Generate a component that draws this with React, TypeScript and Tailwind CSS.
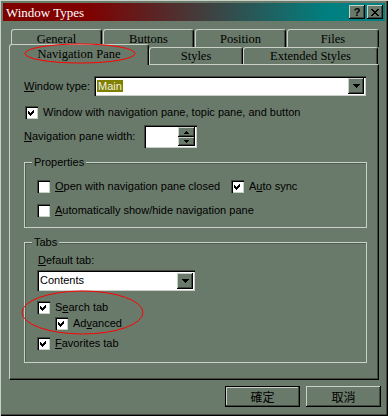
import React from 'react';

const raised = "shadow-[inset_-1px_-1px_#000,inset_1px_1px_#c8d0c8,inset_-2px_-2px_#404840]";
const sunken = "shadow-[inset_1px_1px_#404840,inset_2px_2px_#000,inset_-1px_-1px_#c8d0c8]";

function U({ children }: { children: React.ReactNode }) {
  return <span className="underline underline-offset-[1px] decoration-[1px]">{children}</span>;
}

function CB({ checked }: { checked?: boolean }) {
  return (
    <div className={`w-[13px] h-[13px] bg-white shrink-0 ${sunken}`}>
      {checked && (
        <svg width="13" height="13" viewBox="0 0 13 13" shapeRendering="crispEdges">
          <polygon points="3,5 5,7 9,3 9,6 5,10 3,8" fill="#000" />
        </svg>
      )}
    </div>
  );
}

function DownBtn() {
  return (
    <div className={`w-[16px] h-[16px] bg-[#6a7a6a] flex items-center justify-center shrink-0 ${raised}`}>
      <svg width="7" height="4" viewBox="0 0 7 4" shapeRendering="crispEdges">
        <polygon points="0,0 7,0 3.5,4" fill="#000" />
      </svg>
    </div>
  );
}

function Tab({ label, w, selected }: { label: string; w: string; selected?: boolean }) {
  return (
    <div
      className={`${w} ${selected ? 'h-[21px] -mb-px relative z-10' : 'h-full'} bg-[#6a7a6a] border-t border-l border-r border-t-[#c8d0c8] border-l-[#c8d0c8] border-r-black rounded-t-[3px] shadow-[inset_-1px_0_#404840] flex ${selected ? 'items-start pt-[2px]' : 'items-center'} justify-center font-['Liberation_Serif',serif] text-[12.5px] leading-[14px] text-black shrink-0`}
    >
      {label}
    </div>
  );
}

function Btn({ children, def }: { children: React.ReactNode; def?: boolean }) {
  return (
    <div
      className={`w-[75px] h-[21px] flex items-center justify-center font-['Noto_Sans_CJK_TC',sans-serif] text-[12px] leading-none ${def ? 'border border-black shadow-[inset_-1px_-1px_#404840,inset_1px_1px_#c8d0c8]' : raised}`}
    >
      {children}
    </div>
  );
}

export default function App() {
  return (
    <div className="relative w-[388px] h-[416px] bg-[#6a7a6a] p-[3px] flex flex-col font-['Liberation_Sans',sans-serif] text-[11px] leading-[13px] text-black shadow-[inset_1px_1px_#c8d0c8,inset_-1px_-1px_#000,inset_-2px_-2px_#404840]">
      {/* Title bar */}
      <div className="h-[18px] flex items-center bg-[linear-gradient(to_right,#800000_0%,#800000_22%,#008080_85%,#008080_100%)] pl-[3px] pr-[2px]">
        <span className="font-['Liberation_Serif',serif] text-[13px] text-white leading-none">Window Types</span>
        <div className="ml-auto flex gap-[2px]">
          <div className={`w-[16px] h-[14px] bg-[#6a7a6a] flex items-center justify-center ${raised}`}>
            <span className="font-bold text-[11px] leading-none">?</span>
          </div>
          <div className={`w-[16px] h-[14px] bg-[#6a7a6a] flex items-center justify-center ${raised}`}>
            <svg width="8" height="7" viewBox="0 0 8 7" shapeRendering="crispEdges">
              <path d="M0.5 0 L7.5 7 M7.5 0 L0.5 7" stroke="#000" strokeWidth="1.6" />
            </svg>
          </div>
        </div>
      </div>

      {/* Tab rows */}
      <div className="mt-[8px] flex gap-[1px] pl-[8px] h-[18px]">
        <Tab label="General" w="w-[91px]" />
        <Tab label="Buttons" w="w-[91px]" />
        <Tab label="Position" w="w-[91px]" />
        <Tab label="Files" w="w-[92px]" />
      </div>
      <div className="flex items-end pl-[6px] h-[17px]">
        <Tab label="Navigation Pane" w="w-[140px]" selected />
        <Tab label="Styles" w="w-[94px]" />
        <Tab label="Extended Styles" w="w-[135px]" />
      </div>

      {/* Panel */}
      <div className="ml-[6px] w-[370px] h-[316px] border-l border-t border-r border-b border-l-[#c8d0c8] border-t-[#c8d0c8] border-r-black border-b-black shadow-[inset_-1px_-1px_#404840] flex flex-col">
        <div className="mt-[11px] h-[20px] flex items-center pl-[14px]">
          <span className="w-[70px]">
            <U>W</U>indow type:
          </span>
          <div className={`w-[272px] h-[20px] bg-white p-[2px] flex items-center ${sunken}`}>
            <div className="flex-1 pl-[1px]">
              <span className="bg-[#808000] text-[#f0f0e0] px-[1px]">Main</span>
            </div>
            <DownBtn />
          </div>
        </div>

        <div className="mt-[10px] h-[13px] flex items-center gap-[5px] pl-[15px]">
          <CB checked />
          <span>Window with navigation pane, topic pane, and button</span>
        </div>

        <div className="mt-[6px] h-[23px] flex items-center pl-[14px]">
          <span className="w-[120px]">
            <U>N</U>avigation pane width:
          </span>
          <div className={`w-[53px] h-[23px] bg-white p-[2px] flex justify-end ${sunken}`}>
            <div className="flex flex-col w-[17px]">
              <div className={`h-[10px] bg-[#6a7a6a] flex items-center justify-center ${raised}`}>
                <svg width="5" height="3" viewBox="0 0 5 3" shapeRendering="crispEdges">
                  <polygon points="2.5,0 5,3 0,3" fill="#000" />
                </svg>
              </div>
              <div className={`h-[9px] bg-[#6a7a6a] flex items-center justify-center ${raised}`}>
                <svg width="5" height="3" viewBox="0 0 5 3" shapeRendering="crispEdges">
                  <polygon points="0,0 5,0 2.5,3" fill="#000" />
                </svg>
              </div>
            </div>
          </div>
        </div>

        {/* Properties group */}
        <div className="mt-[14px] ml-[14px] w-[343px] h-[66px] border border-[#c8d0c8] shadow-[inset_1px_1px_#505e50] flex flex-col">
          <span className="self-start -mt-[7px] ml-[7px] px-[2px] bg-[#6a7a6a]">Properties</span>
          <div className="mt-[11px] h-[13px] flex pl-[12px]">
            <div className="w-[194px] flex items-center gap-[5px]">
              <CB />
              <span>
                <U>O</U>pen with navigation pane closed
              </span>
            </div>
            <div className="flex items-center gap-[5px]">
              <CB checked />
              <span>
                A<U>u</U>to sync
              </span>
            </div>
          </div>
          <div className="mt-[11px] h-[13px] flex items-center gap-[5px] pl-[12px]">
            <CB />
            <span>
              <U>A</U>utomatically show/hide navigation pane
            </span>
          </div>
        </div>

        {/* Tabs group */}
        <div className="mt-[14px] ml-[14px] w-[343px] h-[121px] border border-[#c8d0c8] shadow-[inset_1px_1px_#505e50] flex flex-col">
          <span className="self-start -mt-[7px] ml-[7px] px-[2px] bg-[#6a7a6a]">Tabs</span>
          <span className="mt-[5px] pl-[13px]">
            <U>D</U>efault tab:
          </span>
          <div className={`mt-[3px] ml-[12px] w-[158px] h-[21px] bg-white p-[2px] flex items-center ${sunken}`}>
            <span className="flex-1 pl-[1px]">Contents</span>
            <div className="h-[17px] flex items-center">
              <DownBtn />
            </div>
          </div>
          <div className="mt-[10px] h-[13px] flex items-center gap-[5px] pl-[12px]">
            <CB checked />
            <span>
              S<U>e</U>arch tab
            </span>
          </div>
          <div className="mt-[3px] h-[13px] flex items-center gap-[5px] pl-[30px]">
            <CB checked />
            <span>
              Ad<U>v</U>anced
            </span>
          </div>
          <div className="mt-[7px] h-[13px] flex items-center gap-[5px] pl-[12px]">
            <CB checked />
            <span>
              <U>F</U>avorites tab
            </span>
          </div>
        </div>
      </div>

      {/* Buttons */}
      <div className="mt-[6px] flex justify-end gap-[6px] pr-[4px]">
        <Btn def>確定</Btn>
        <Btn>取消</Btn>
      </div>

      {/* Red annotation ellipses */}
      <svg className="pointer-events-none absolute inset-0 z-20" width="388" height="416" viewBox="0 0 388 416">
        <ellipse cx="80" cy="53.5" rx="55" ry="9.5" fill="none" stroke="#ff0000" strokeWidth="1" />
        <ellipse cx="82.5" cy="312.5" rx="60.5" ry="21.5" fill="none" stroke="#ff0000" strokeWidth="1" />
      </svg>
    </div>
  );
}
